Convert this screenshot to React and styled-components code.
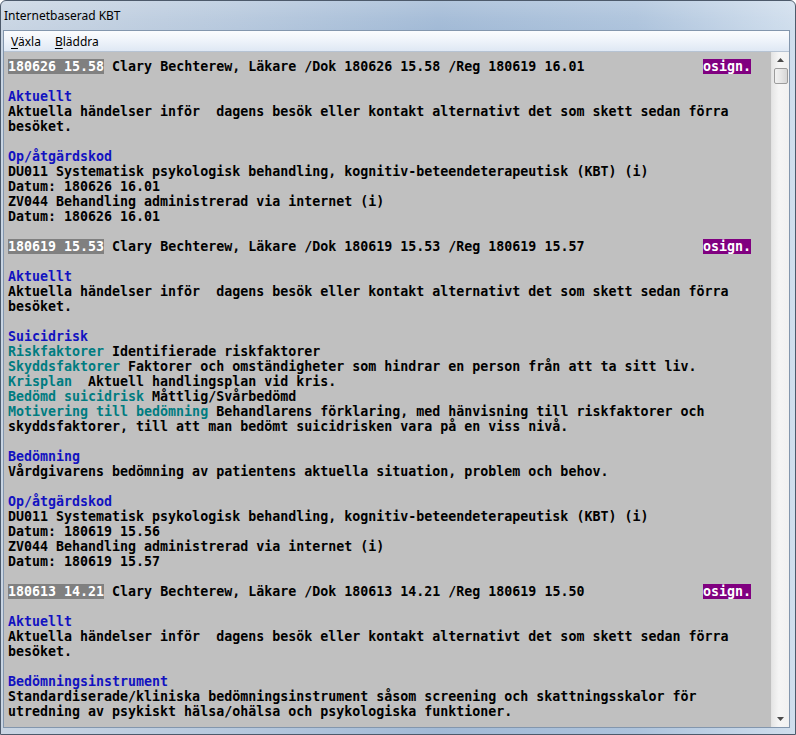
import React from 'react'
import styled, { createGlobalStyle } from 'styled-components'

const GlobalStyle = createGlobalStyle`
  html, body {
    margin: 0;
    padding: 0;
    background: #ffffff;
  }
`

const Window = styled.div`
  width: 796px;
  height: 735px;
  box-sizing: border-box;
  display: flex;
  flex-direction: column;
  border: 1px solid #4d5a6b;
  border-radius: 6px 6px 0 0;
  overflow: hidden;
  background: linear-gradient(90deg, #c9d5e3 0%, #b6c8dd 30%, #a2bad6 55%, #adc3dc 80%, #d0deed 100%);
`

const TitleBar = styled.div`
  height: 29px;
  flex: none;
  display: flex;
  align-items: center;
  padding-left: 3px;
  font-family: 'Noto Sans', 'DejaVu Sans', sans-serif;
  font-size: 12px;
  color: #000;
  background: linear-gradient(180deg, rgba(255, 255, 255, 0.18) 0%, rgba(255, 255, 255, 0.05) 60%, rgba(255, 255, 255, 0) 100%);
`

const Client = styled.div`
  flex: 1;
  min-height: 0;
  display: flex;
  flex-direction: column;
  margin: 0 5px 6px 2px;
  border: 1px solid #8396ad;
  background: #f0f0f0;
`

const MenuBar = styled.div`
  height: 20px;
  flex: none;
  display: flex;
  align-items: center;
  gap: 14px;
  padding-left: 7px;
  font-family: 'Noto Sans', 'DejaVu Sans', sans-serif;
  font-size: 12px;
  color: #000;
  background: linear-gradient(180deg, #fbfcfe 0%, #eef3fa 50%, #dfe8f4 100%);
  border-bottom: 1px solid #b6c3d3;
`

const MenuItem = styled.span`
  u {
    text-decoration: underline;
    text-underline-offset: 2px;
  }
`

const Body = styled.div`
  flex: 1;
  min-height: 0;
  display: flex;
`

const Content = styled.div`
  flex: 1;
  min-width: 0;
  overflow: hidden;
  background: #c0c0c0;
  padding: 7px 20px 0 4px;
  font-family: 'DejaVu Sans Mono', 'Liberation Mono', monospace;
  font-weight: bold;
  font-size: 13.3px;
  line-height: 15px;
  color: #000;
`

const Line = styled.div`
  height: 15px;
  white-space: pre;
`

const HeaderRow = styled.div`
  height: 15px;
  display: flex;
  justify-content: space-between;
  white-space: pre;
`

const Badge = styled.span`
  background: ${({ bg }) => bg};
  color: #ffffff;
  height: 15px;
`

const Heading = styled.span`
  color: #1212c0;
`

const Label = styled.span`
  color: #007c80;
`

const Scrollbar = styled.div`
  width: 17px;
  flex: none;
  display: flex;
  flex-direction: column;
  align-items: center;
  background: linear-gradient(90deg, #e6e6e6 0%, #f5f5f5 40%, #f1f1f1 100%);
  border-left: 1px solid #e3e3e3;
`

const ArrowBtn = styled.div`
  height: 16px;
  width: 100%;
  display: flex;
  align-items: center;
  justify-content: center;
`

const Thumb = styled.div`
  width: 14px;
  height: 16px;
  box-sizing: border-box;
  border: 1px solid #9c9c9c;
  border-radius: 2px;
  background: linear-gradient(90deg, #f2f2f2 0%, #e6e6e6 50%, #d6d6d6 100%);
`

const Track = styled.div`
  flex: 1;
`

function Arrow({ down }) {
  return (
    <svg width="7" height="4" viewBox="0 0 7 4">
      {down ? <path d="M0 0 H7 L3.5 4 Z" fill="#4a4a4a" /> : <path d="M0 4 H7 L3.5 0 Z" fill="#4a4a4a" />}
    </svg>
  )
}

const Blank = () => <Line> </Line>

function Header({ date, rest }) {
  return (
    <HeaderRow>
      <span>
        <Badge bg="#808080">{date}</Badge> {rest}
      </span>
      <Badge bg="#800080">osign.</Badge>
    </HeaderRow>
  )
}

function Aktuellt() {
  return (
    <>
      <Line>
        <Heading>Aktuellt</Heading>
      </Line>
      <Line>Aktuella händelser inför  dagens besök eller kontakt alternativt det som skett sedan förra</Line>
      <Line>besöket.</Line>
    </>
  )
}

function Atgard({ d1, d2 }) {
  return (
    <>
      <Line>
        <Heading>Op/åtgärdskod</Heading>
      </Line>
      <Line>DU011 Systematisk psykologisk behandling, kognitiv-beteendeterapeutisk (KBT) (i)</Line>
      <Line>Datum: {d1}</Line>
      <Line>ZV044 Behandling administrerad via internet (i)</Line>
      <Line>Datum: {d2}</Line>
    </>
  )
}

export default function App() {
  return (
    <>
      <GlobalStyle />
      <Window>
        <TitleBar>Internetbaserad KBT</TitleBar>
        <Client>
          <MenuBar>
            <MenuItem>
              <u>V</u>äxla
            </MenuItem>
            <MenuItem>
              <u>B</u>läddra
            </MenuItem>
          </MenuBar>
          <Body>
            <Content>
              <Header date="180626 15.58" rest="Clary Bechterew, Läkare /Dok 180626 15.58 /Reg 180619 16.01" />
              <Blank />
              <Aktuellt />
              <Blank />
              <Atgard d1="180626 16.01" d2="180626 16.01" />
              <Blank />
              <Header date="180619 15.53" rest="Clary Bechterew, Läkare /Dok 180619 15.53 /Reg 180619 15.57" />
              <Blank />
              <Aktuellt />
              <Blank />
              <Line>
                <Heading>Suicidrisk</Heading>
              </Line>
              <Line>
                <Label>Riskfaktorer</Label> Identifierade riskfaktorer
              </Line>
              <Line>
                <Label>Skyddsfaktorer</Label> Faktorer och omständigheter som hindrar en person från att ta sitt liv.
              </Line>
              <Line>
                <Label>Krisplan</Label>  Aktuell handlingsplan vid kris.
              </Line>
              <Line>
                <Label>Bedömd suicidrisk</Label> Måttlig/Svårbedömd
              </Line>
              <Line>
                <Label>Motivering till bedömning</Label> Behandlarens förklaring, med hänvisning till riskfaktorer och
              </Line>
              <Line>skyddsfaktorer, till att man bedömt suicidrisken vara på en viss nivå.</Line>
              <Blank />
              <Line>
                <Heading>Bedömning</Heading>
              </Line>
              <Line>Vårdgivarens bedömning av patientens aktuella situation, problem och behov.</Line>
              <Blank />
              <Atgard d1="180619 15.56" d2="180619 15.57" />
              <Blank />
              <Header date="180613 14.21" rest="Clary Bechterew, Läkare /Dok 180613 14.21 /Reg 180619 15.50" />
              <Blank />
              <Aktuellt />
              <Blank />
              <Line>
                <Heading>Bedömningsinstrument</Heading>
              </Line>
              <Line>Standardiserade/kliniska bedömningsinstrument såsom screening och skattningsskalor för</Line>
              <Line>utredning av psykiskt hälsa/ohälsa och psykologiska funktioner.</Line>
              <Blank />
            </Content>
            <Scrollbar>
              <ArrowBtn>
                <Arrow />
              </ArrowBtn>
              <Thumb />
              <Track />
              <ArrowBtn>
                <Arrow down />
              </ArrowBtn>
            </Scrollbar>
          </Body>
        </Client>
      </Window>
    </>
  )
}
